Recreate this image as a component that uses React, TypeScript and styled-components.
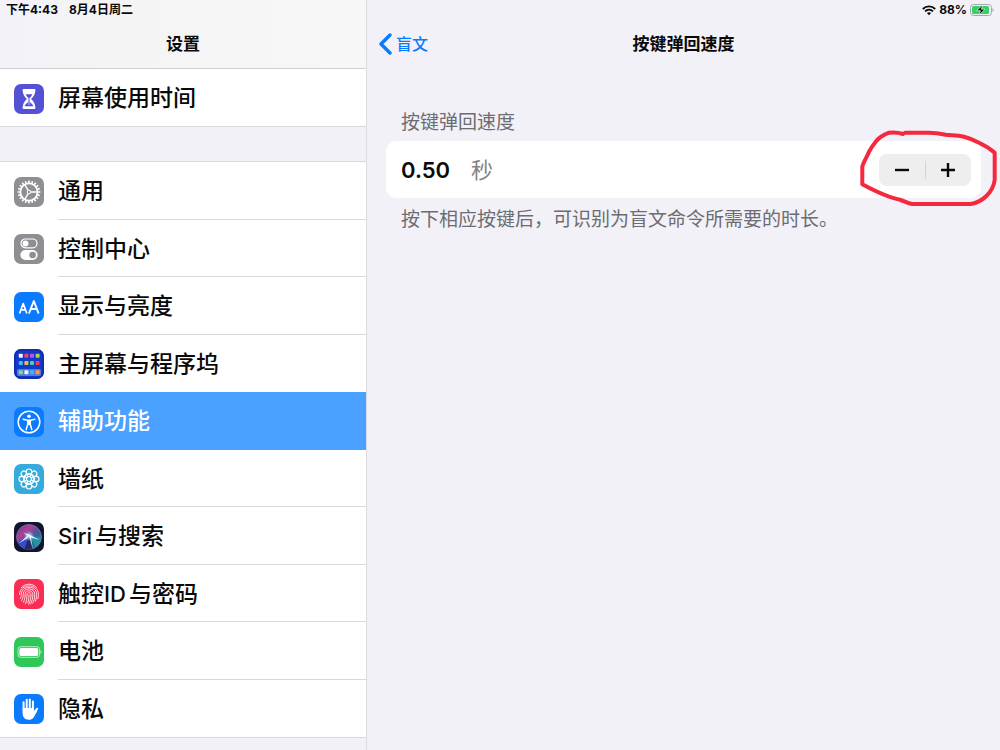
import React, { useState } from "react";
import styled, { createGlobalStyle } from "styled-components";

const GlobalStyle = createGlobalStyle`
  * { box-sizing: border-box; }
  body {
    margin: 0;
    background: #f2f1f7;
    color: #0a0a0a;
    font-family: Inter, "Noto Sans CJK SC", sans-serif;
  }
`;

const Page = styled.div`
  display: grid;
  grid-template-columns: minmax(280px, 367fr) minmax(0, 633fr);
  min-height: 100vh;
`;

const Sidebar = styled.aside`
  border-right: 1px solid #dcdbe1;
`;

const SidebarHeader = styled.header`
  height: 69px;
  background: linear-gradient(90deg, #f3f2fa, #f4f4f5 25%, #f7f7f8);
  border-bottom: 1px solid #cfcfd2;
`;

const StatusBar = styled.div<{ $end?: boolean }>`
  display: flex;
  align-items: center;
  justify-content: ${(p) => (p.$end ? "flex-end" : "flex-start")};
  gap: ${(p) => (p.$end ? "3px" : "11px")};
  height: 20px;
  padding: 0 6px;
  font-size: 12px;
  line-height: 20px;
  font-weight: 700;
`;

const NavBar = styled.div`
  display: grid;
  grid-template-columns: 1fr auto 1fr;
  align-items: center;
  height: 48px;
  padding: 0 12px;
`;

const NavTitle = styled.h1`
  grid-column: 2;
  margin: 0;
  font-size: 17px;
  line-height: 24px;
  font-weight: 600;
`;

const BackLink = styled.a`
  display: flex;
  align-items: center;
  justify-self: start;
  gap: 4px;
  color: #077aff;
  font-size: 16px;
  line-height: 24px;
  font-weight: 500;
  text-decoration: none;
`;

const Group = styled.nav<{ $height: number }>`
  display: grid;
  grid-auto-rows: 1fr;
  min-height: ${(p) => p.$height}px;
  background: #fff;
  border-bottom: 1px solid #d9d8dd;

  & + & {
    margin-top: 34px;
    border-top: 1px solid #d9d8dd;
  }
`;

const RowLabel = styled.span`
  display: flex;
  flex: 1;
  align-items: center;
  align-self: stretch;
  border-bottom: 1px solid #d9d9dc;
`;

const Row = styled.a<{ $selected?: boolean }>`
  display: flex;
  align-items: center;
  gap: 14px;
  padding: 2px 0 0 14px;
  background: ${(p) => (p.$selected ? "#4ba1ff" : "#fff")};
  color: ${(p) => (p.$selected ? "#fff" : "#0a0a0a")};
  font-size: 23px;
  line-height: 32px;
  font-weight: 500;
  text-decoration: none;

  &:last-child ${RowLabel},
  &[aria-current] ${RowLabel},
  &:has(+ [aria-current]) ${RowLabel} {
    border-bottom-color: transparent;
  }
`;

const Latin = styled.span`
  margin-right: 3px;
  font-size: 22px;
`;

const Tile = styled.svg`
  display: block;
  flex: none;
  width: 30px;
  height: 30px;
  border-radius: 7px;
`;

const Content = styled.main`
  min-width: 0;
`;

const Section = styled.section`
  padding: 42px 19px;
`;

const SectionLabel = styled.label`
  display: block;
  padding: 0 15px 5px;
  color: #6c6c71;
  font-size: 19px;
  line-height: 26px;
`;

const Card = styled.div`
  display: flex;
  align-items: center;
  height: 57px;
  padding: 0 10px 0 15px;
  border-radius: 10px;
  background: #fff;
`;

const ValueInput = styled.input`
  width: 70px;
  padding: 0;
  border: 0;
  outline: 0;
  background: transparent;
  color: #0a0a0a;
  font: 600 22px/32px Inter, sans-serif;
`;

const Unit = styled.span`
  flex: 1;
  color: #838386;
  font-size: 22px;
  line-height: 32px;
`;

const Stepper = styled.div`
  position: relative;
  display: flex;
  align-items: center;
  width: 92px;
  height: 32px;
  border-radius: 8px;
  background: #eeeeef;
`;

const StepButton = styled.button`
  display: grid;
  flex: 1;
  place-items: center;
  height: 32px;
  padding: 0;
  border: 0;
  background: transparent;
  color: #0a0a0a;

  & + & {
    background: linear-gradient(#d4d4d7, #d4d4d7) left center / 1px 18px no-repeat;
  }
`;

const Marker = styled.svg`
  position: absolute;
  left: -20px;
  top: -26px;
  width: 140px;
  height: 80px;
  pointer-events: none;
`;

const Hint = styled.p`
  margin: 0;
  padding: 9px 15px;
  color: #6c6c71;
  font-size: 19px;
  line-height: 26px;
`;

const ring = (n: number) => Array.from({ length: n }, (_, i) => (i * 360) / n);

const HourglassIcon = () => (
  <Tile viewBox="0 0 30 30" aria-hidden="true">
    <rect width="30" height="30" fill="#5551d6" />
    <path d="M9.600 5h10.800c.8 0 1.200.6 1 1.400-.4 3.600-1.600 6.400-4.400 8.600 2.800 2.200 4 5 4.400 8.600.2.800-.2 1.400-1 1.400H9.600c-.8 0-1.200-.6-1-1.400.4-3.600 1.600-6.400 4.400-8.600-2.800-2.200-4-5-4.400-8.600-.2-.8.200-1.400 1-1.400z" fill="#fff" />
    <path d="M11.600 10.200h6.800c-.6 1.600-1.600 2.800-2.600 3.800v3.600c.2 1.600 3 2.400 3.600 4.600h-8.800c.6-2.200 3.400-3 3.600-4.600V14c-1-1-2-2.200-2.600-3.800z" fill="#5551d6" />
    <path d="M15 13.500v7.500" stroke="#fff" strokeWidth=".7" />
  </Tile>
);

const GearIcon = () => (
  <Tile viewBox="0 0 30 30" aria-hidden="true">
    <rect width="30" height="30" fill="#8e8e93" />
    <g fill="none" stroke="#fff" transform="translate(15 15)">
      <circle r="8.600" strokeWidth="1.800" />
      {ring(20).map((a) => (
        <path key={a} d="M0-9V-11.400" strokeWidth="1.600" transform={`rotate(${a})`} />
      ))}
      <circle r="1.800" strokeWidth="1" />
      {[90, 210, 330].map((a) => (
        <path key={a} d="M0-1.800V-8" strokeWidth="1.300" transform={`rotate(${a})`} />
      ))}
    </g>
  </Tile>
);

const SwitchesIcon = () => (
  <Tile viewBox="0 0 30 30" aria-hidden="true">
    <rect width="30" height="30" fill="#8e8e93" />
    <rect x="7" y="5" width="16" height="8.800" rx="4.400" fill="none" stroke="#fff" strokeWidth="1.200" />
    <circle cx="11.500" cy="9.400" r="3" fill="#fff" />
    <rect x="6.400" y="16" width="17.200" height="10" rx="5" fill="#fff" />
    <circle cx="18.600" cy="21" r="3.300" fill="#8e8e93" />
  </Tile>
);

const DisplayIcon = () => (
  <Tile viewBox="0 0 30 30" aria-hidden="true">
    <rect width="30" height="30" fill="#0a7aff" />
    <g fill="none" stroke="#fff" strokeLinecap="round" strokeLinejoin="round">
      <path d="M5.800 20.800l3.400-9.200 3.400 9.200M7 17.800h4.400" strokeWidth="1.700" />
      <path d="M15.200 20.800l4.600-11.800 4.600 11.800M16.800 17h6" strokeWidth="1.900" />
    </g>
  </Tile>
);

const dockColors = [
  ["#f4f4ff", "#f5445a", "#c252e8", "#a4d94c"],
  ["#35c3f5", "#f7b733", "#41d39b", "#f0384e"],
  ["#7be07a", "#eef3ff", "#33b6f4", "#f99a3d"],
];

const HomeScreenIcon = () => (
  <Tile viewBox="0 0 30 30" aria-hidden="true">
    <rect width="30" height="30" fill="#1338cc" />
    <rect x="1" y="1" width="28" height="28" rx="6" fill="none" stroke="#102fae" strokeWidth="2" />
    <rect x="3" y="20" width="24" height="7" rx="1.500" fill="#5578dc" />
    {dockColors.map((line, y) =>
      line.map((c, x) => (
        <rect key={`${x}-${y}`} x={4.800 + x * 5.600} y={[4.800, 12, 21.300][y]} width="4" height="4" rx=".8" fill={c} />
      )),
    )}
  </Tile>
);

const AccessibilityIcon = () => (
  <Tile viewBox="0 0 30 30" aria-hidden="true">
    <rect width="30" height="30" fill="#0a7aff" />
    <circle cx="15" cy="15" r="10.800" fill="none" stroke="#fff" strokeWidth="1.500" />
    <circle cx="15" cy="9.300" r="1.800" fill="#fff" />
    <path d="M9.200 12.300l4.300.9h3l4.300-.9M15 13.500v4M13.700 13.500v4l-1.500 5M16.300 13.500v4l1.500 5" fill="none" stroke="#fff" strokeWidth="1.500" strokeLinecap="round" strokeLinejoin="round" />
  </Tile>
);

const WallpaperIcon = () => (
  <Tile viewBox="0 0 30 30" aria-hidden="true">
    <rect width="30" height="30" fill="#35aadc" />
    <g fill="none" stroke="#fff" strokeWidth="1.200" transform="translate(15 15)">
      <circle r="2.500" />
      {ring(8).map((a) => (
        <g key={a} transform={`rotate(${a})`}>
          <circle cy="-7.300" r="2.700" />
          <ellipse cy="-4" rx="1.500" ry="1.700" strokeWidth=".8" />
        </g>
      ))}
    </g>
  </Tile>
);

const SiriIcon = () => (
  <Tile viewBox="0 0 30 30" aria-hidden="true">
    <defs>
      <linearGradient id="siriOrb" x1="0" y1="0" x2="1" y2="1">
        <stop offset="0" stopColor="#3b4fae" />
        <stop offset=".3" stopColor="#b53c92" />
        <stop offset=".6" stopColor="#3f5c9c" />
        <stop offset="1" stopColor="#1a8f90" />
      </linearGradient>
      <radialGradient id="siriGlow">
        <stop offset="0" stopColor="#fff" />
        <stop offset=".4" stopColor="#bfeaff" stopOpacity=".6" />
        <stop offset="1" stopColor="#59bff0" stopOpacity="0" />
      </radialGradient>
    </defs>
    <rect width="30" height="30" fill="#12142f" />
    <circle cx="15" cy="15" r="12.500" fill="url(#siriOrb)" stroke="#7b7fae" strokeWidth=".7" />
    <path d="M15 13L3.500 20c1 3 4 6 7 6.800z" fill="#2a4fd0" opacity=".85" />
    <path d="M15 14l12 1c0 5-2 8-5 10z" fill="#1aa5a0" opacity=".7" />
    <path d="M14.500 15l-4 12c3 1 6 1 8 0z" fill="#231d5c" opacity=".85" />
    <circle cx="15" cy="14" r="5.500" fill="url(#siriGlow)" />
    <path d="M15 12.500L4.500 21.500l8.500-5zM15 13l3.800 13.500L16.800 15zM15 12.500l10.500 5.500L17 15.500zM15 13l-5.500-2.500 4.500 4z" fill="#eafaff" />
  </Tile>
);

const FingerprintIcon = () => (
  <Tile viewBox="0 0 30 30" aria-hidden="true">
    <rect width="30" height="30" fill="#fb2d55" />
    <g fill="none" stroke="#ffd9e0" strokeWidth="1" strokeLinecap="round">
      <path d="M7.500 8.500C11.500 4 18.500 4 22.500 8.500" />
      <path d="M5.500 15.500C5.500 4 24.500 4 24.500 15.500c0 1.500-.2 3-.7 4.200" />
      <path d="M6.300 19.500c.9-1.500 1-2.600 1-4C7.300 6 22.700 6 22.700 15.500c0 2.500-.4 4.600-1.400 6.700" />
      <path d="M7.700 21.500c1.200-2 1.500-3.800 1.500-6 0-7.500 11.600-7.500 11.600 0 0 3.500-.7 6.300-2.100 8.700" />
      <path d="M9.500 23.200c1.200-2.500 1.600-4.800 1.600-7.700 0-5 7.800-5 7.800 0 0 3.700-.8 6.900-2.400 9.500" />
      <path d="M11.500 24.500c1.100-2.700 1.500-5.600 1.500-9 0-2.600 4-2.600 4 0 0 3.800-.8 7-2.300 9.800" />
      <path d="M15 15.500c0 3-.3 5.700-1.200 8.300" />
    </g>
  </Tile>
);

const BatteryTileIcon = () => (
  <Tile viewBox="0 0 30 30" aria-hidden="true">
    <rect width="30" height="30" fill="#30c759" />
    <rect x="4" y="9.700" width="21.600" height="10.600" rx="2.800" fill="none" stroke="#c8f1d2" strokeWidth=".9" />
    <rect x="5.400" y="11" width="18.800" height="8" rx="1.600" fill="#fff" />
    <path d="M26.500 13.300c1.300.5 1.300 2.900 0 3.400z" fill="#c8f1d2" />
  </Tile>
);

const HandIcon = () => (
  <Tile viewBox="0 0 30 30" aria-hidden="true">
    <rect width="30" height="30" fill="#0a7aff" />
    <g fill="none" stroke="#fff" strokeWidth="2" strokeLinecap="round">
      <path d="M9.600 16V8.300M12.700 15V5.800M15.800 15V5.500M18.900 16V7.500" />
      <path d="M19.500 19.500l3.600-4.700" strokeWidth="2.200" />
    </g>
    <path d="M8.600 14h11.300v3.800l1.600-2 1.700 1.300c-1.500 2.600-2.300 4.800-3.800 6.600-1.200 1.400-2.700 2-4.700 2-4 0-6.100-2.700-6.100-6.700z" fill="#fff" />
  </Tile>
);

const WifiIcon = () => (
  <svg width="14" height="11" viewBox="0 0 14 11" aria-label="Wi-Fi">
    <g fill="none" stroke="#0a0a0a" strokeWidth="1.800">
      <path d="M.8 4C4.300.5 9.700.5 13.200 4" />
      <path d="M3 6.400c2.300-2.200 5.700-2.200 8 0" />
    </g>
    <path d="M4.900 8.100c1.200-1.100 3-1.100 4.200 0L7 10.300z" fill="#0a0a0a" />
  </svg>
);

const ChargingIcon = () => (
  <svg width="24" height="12" viewBox="0 0 24 12" aria-hidden="true">
    <rect x=".5" y=".5" width="21" height="11" rx="3" fill="none" stroke="#a5a5aa" />
    <rect x="2" y="2" width="17" height="8" rx="1.600" fill="#35d163" />
    <path d="M22.500 4c1.400.5 1.400 3.500 0 4z" fill="#a5a5aa" />
    <path d="M12.700.8L6.800 6.700h3.600L9 11.200l6-6h-3.600z" fill="#0a0a0a" stroke="#f2f1f7" strokeWidth=".7" />
  </svg>
);

type Item = { id: string; icon: React.ReactNode; label: React.ReactNode };

const topItems: Item[] = [{ id: "screen-time", icon: <HourglassIcon />, label: "屏幕使用时间" }];

const items: Item[] = [
  { id: "general", icon: <GearIcon />, label: "通用" },
  { id: "control-center", icon: <SwitchesIcon />, label: "控制中心" },
  { id: "display", icon: <DisplayIcon />, label: "显示与亮度" },
  { id: "home-screen", icon: <HomeScreenIcon />, label: "主屏幕与程序坞" },
  { id: "accessibility", icon: <AccessibilityIcon />, label: "辅助功能" },
  { id: "wallpaper", icon: <WallpaperIcon />, label: "墙纸" },
  { id: "siri", icon: <SiriIcon />, label: <><Latin>Siri</Latin>与搜索</> },
  { id: "touch-id", icon: <FingerprintIcon />, label: <>触控<Latin>ID</Latin>与密码</> },
  { id: "battery", icon: <BatteryTileIcon />, label: "电池" },
  { id: "privacy", icon: <HandIcon />, label: "隐私" },
];

const MenuGroup = ({ list, height, selected }: { list: Item[]; height: number; selected?: string }) => (
  <Group $height={height}>
    {list.map((item) => (
      <Row
        key={item.id}
        href={`#${item.id}`}
        $selected={item.id === selected}
        aria-current={item.id === selected ? "page" : undefined}
      >
        {item.icon}
        <RowLabel>{item.label}</RowLabel>
      </Row>
    ))}
  </Group>
);

export default function App() {
  const [seconds, setSeconds] = useState("0.50");
  const step = (delta: number) =>
    setSeconds((s) => Math.max(0, (Number(s) || 0) + delta).toFixed(2));

  return (
    <>
      <GlobalStyle />
      <Page>
        <Sidebar>
          <SidebarHeader>
            <StatusBar>
              <span>下午4:43</span>
              <span>8月4日周二</span>
            </StatusBar>
            <NavBar>
              <NavTitle as="h2">设置</NavTitle>
            </NavBar>
          </SidebarHeader>
          <MenuGroup list={topItems} height={58} />
          <MenuGroup list={items} height={577} selected="accessibility" />
        </Sidebar>
        <Content>
          <StatusBar $end>
            <WifiIcon />
            <span>88%</span>
            <ChargingIcon />
          </StatusBar>
          <NavBar>
            <BackLink href="#braille">
              <svg width="13" height="22" viewBox="0 0 13 22" aria-hidden="true">
                <path d="M11 2L2 11l9 9" fill="none" stroke="currentColor" strokeWidth="3.400" strokeLinecap="round" strokeLinejoin="round" />
              </svg>
              盲文
            </BackLink>
            <NavTitle>按键弹回速度</NavTitle>
          </NavBar>
          <Section>
            <SectionLabel htmlFor="seconds">按键弹回速度</SectionLabel>
            <Card>
              <ValueInput
                id="seconds"
                inputMode="decimal"
                value={seconds}
                onChange={(e) => setSeconds(e.target.value)}
              />
              <Unit>秒</Unit>
              <Stepper>
                <StepButton type="button" aria-label="减少" onClick={() => step(-0.05)}>
                  <svg width="16" height="16" viewBox="0 0 16 16" aria-hidden="true">
                    <path d="M1 8h14" stroke="currentColor" strokeWidth="2.400" />
                  </svg>
                </StepButton>
                <StepButton type="button" aria-label="增加" onClick={() => step(0.05)}>
                  <svg width="16" height="16" viewBox="0 0 16 16" aria-hidden="true">
                    <path d="M1 8h14M8 1v14" stroke="currentColor" strokeWidth="2.400" />
                  </svg>
                </StepButton>
                <Marker viewBox="0 0 140 80" aria-hidden="true">
                  <path
                    d="M44 6C40 4.600 35 4.300 30 4.700C24 7 20 9.500 16.700 13.700C14 17 12 20 10 23.700C8 29 4.500 34 3.300 38.700V56.300C11 60.500 20 65 30 68.700C34 70 38 71 41.700 72C46 73.500 49 75.500 53 76H111.700C124 74 134 64 135.700 52V24.700C131 20.500 126 17.500 120 14.700C115 12 110 10 105 8.700C98 7 92 7.500 86.700 6.700C81 5.500 76 4.700 70 4.700H46"
                    fill="none"
                    stroke="#f5293d"
                    strokeWidth="4"
                    strokeLinecap="round"
                    strokeLinejoin="round"
                  />
                </Marker>
              </Stepper>
            </Card>
            <Hint>按下相应按键后，可识别为盲文命令所需要的时长。</Hint>
          </Section>
        </Content>
      </Page>
    </>
  );
}
